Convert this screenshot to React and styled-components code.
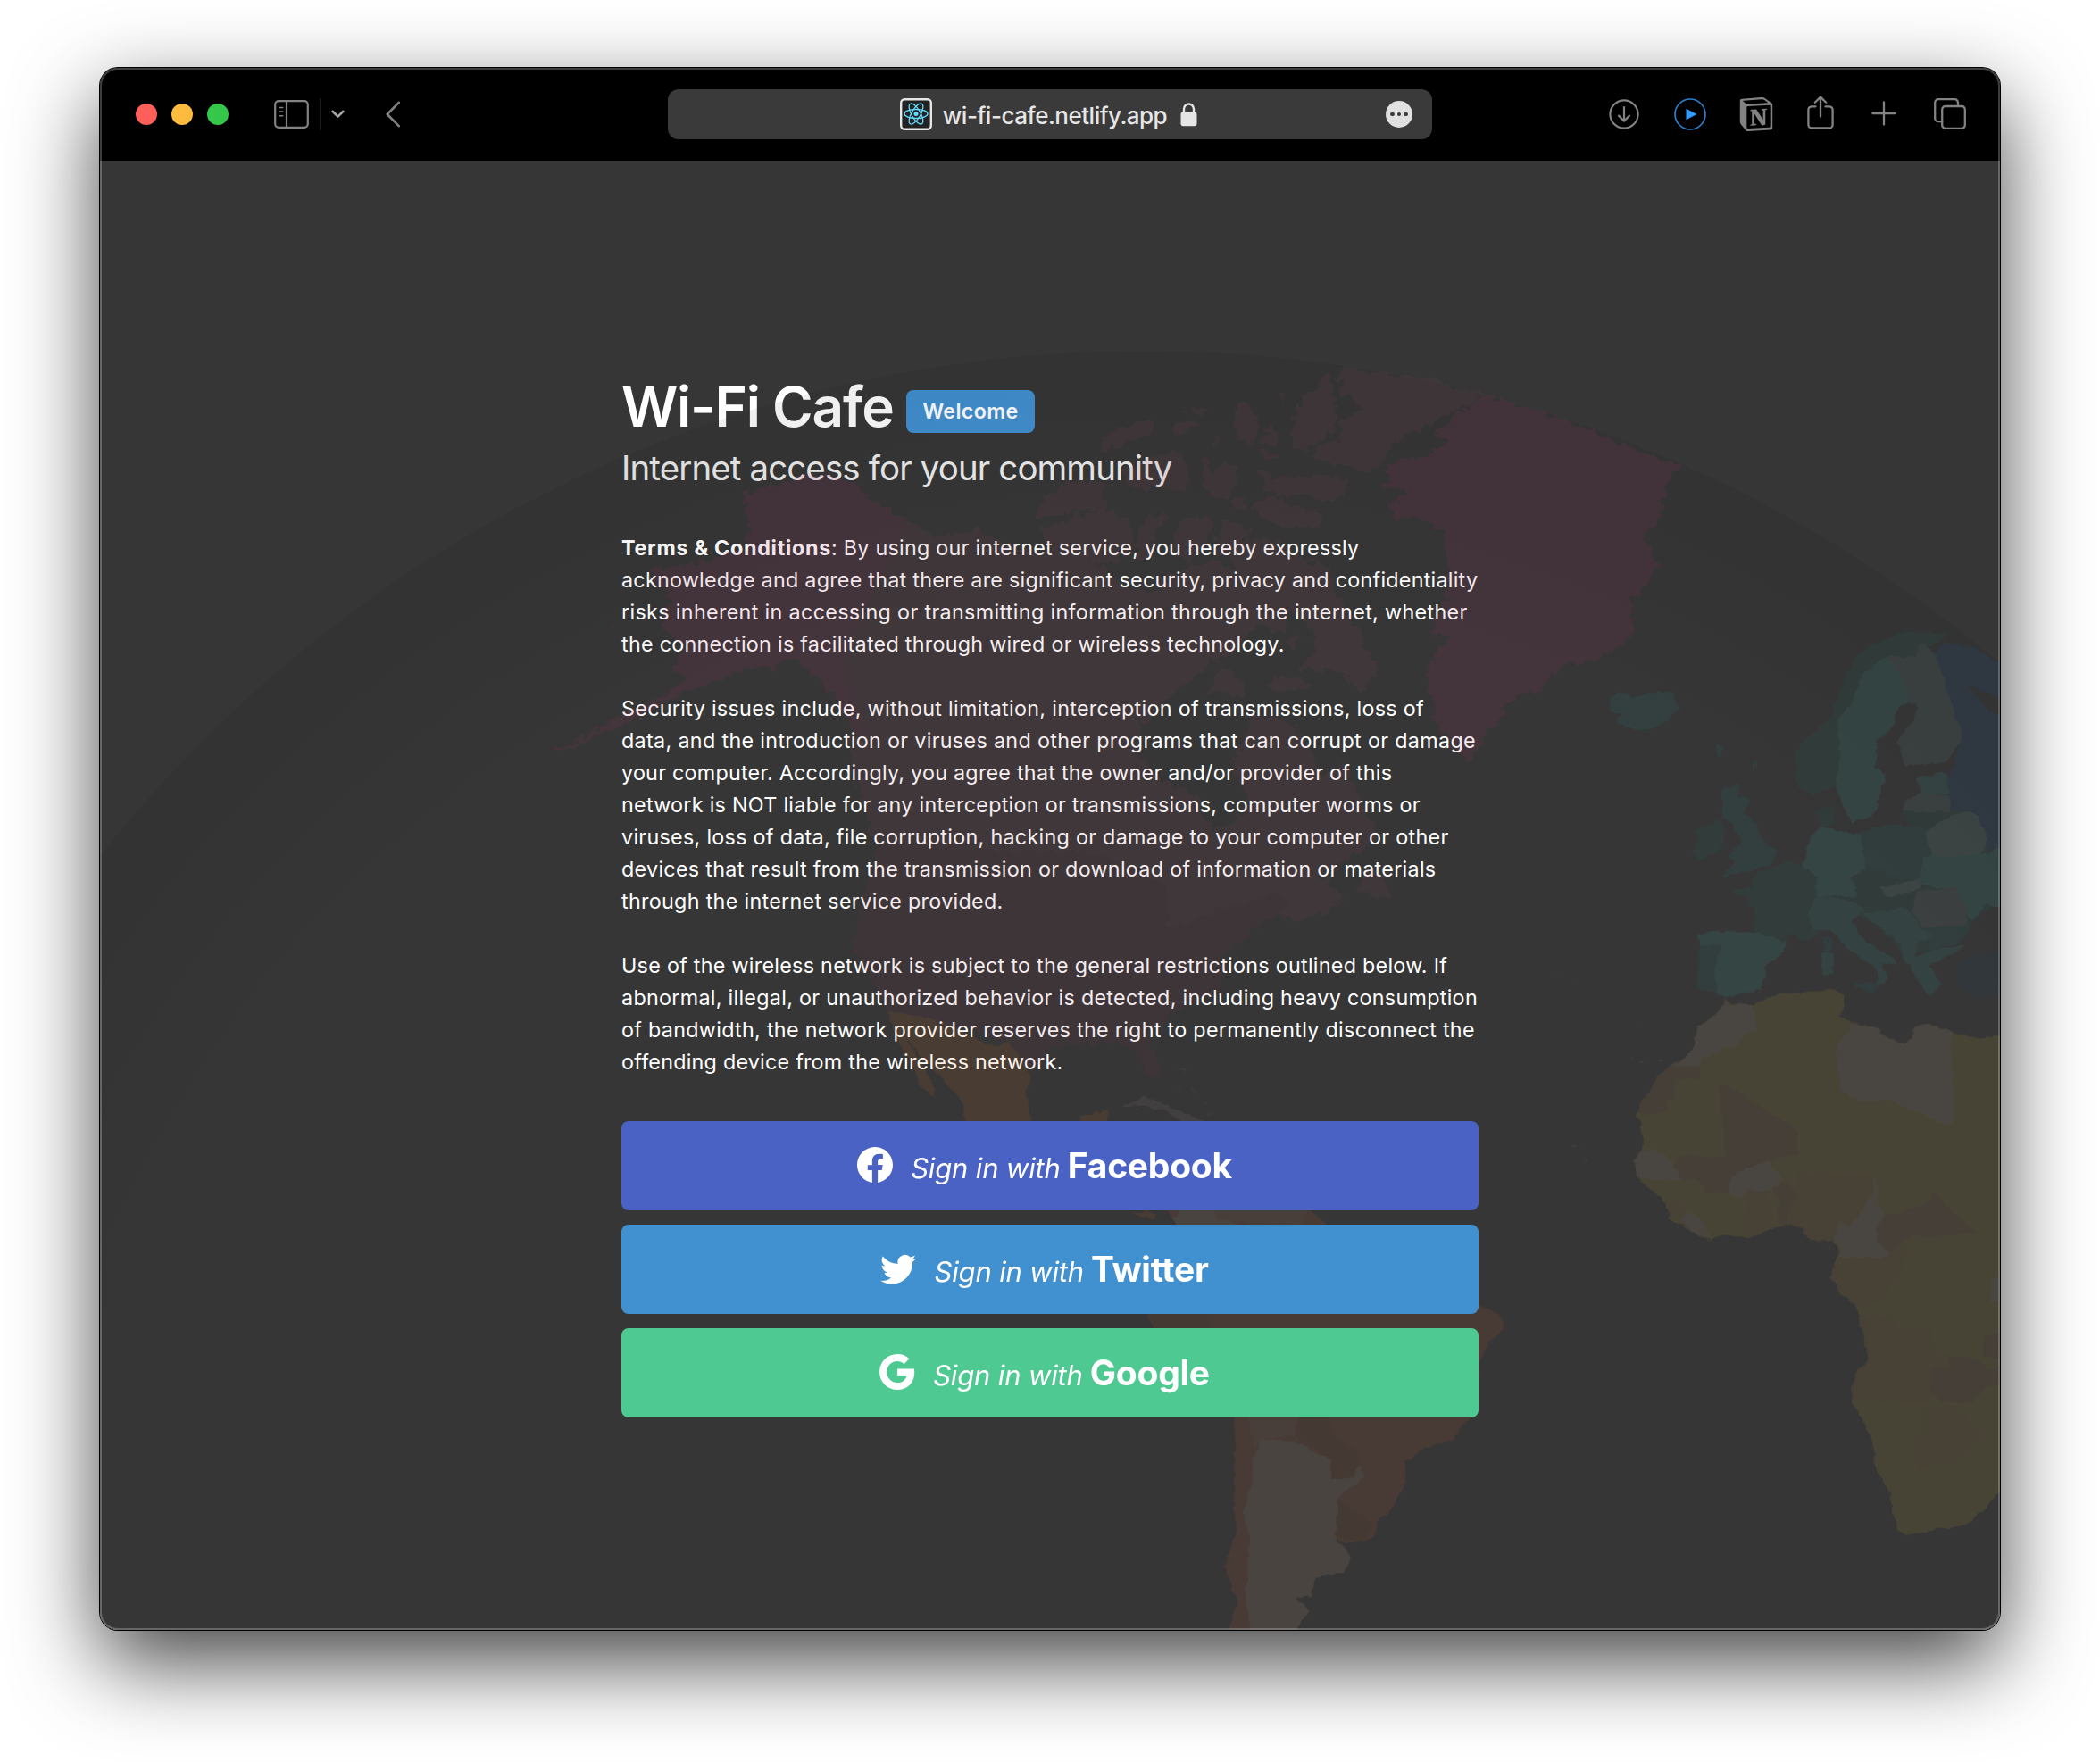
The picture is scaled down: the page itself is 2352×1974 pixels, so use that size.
import React from 'react';
import styled, { createGlobalStyle } from 'styled-components';
import { BsFacebook, BsTwitter, BsGoogle } from 'react-icons/bs';
import { SiNotion } from 'react-icons/si';

const GlobalStyle = createGlobalStyle`
  *, *::before, *::after { box-sizing: border-box; }
  body {
    margin: 0;
    background: #fff;
    font-family: Inter, "Liberation Sans", sans-serif;
    -webkit-font-smoothing: antialiased;
  }
`;

const Desktop = styled.div`
  width: 2352px;
  height: 1974px;
  padding: 76px 112px 148px;
  overflow: hidden;
  background: #fff;
`;

const Window = styled.main`
  position: relative;
  display: flex;
  flex-direction: column;
  height: 1750px;
  border-radius: 20px;
  overflow: hidden;
  background: #363636;
  &::after {
    content: '';
    position: absolute;
    inset: 0;
    border-radius: 20px;
    box-shadow: inset 0 0 0 2px rgba(255, 255, 255, 0.24);
    pointer-events: none;
  }
`;

const WindowShadow = styled.div`
  border-radius: 20px;
  box-shadow: 0 0 0 1px #000, 0 36px 96px rgba(0, 0, 0, 0.74);
`;

const Toolbar = styled.header`
  display: flex;
  align-items: center;
  flex: none;
  height: 104px;
  background: #000;
`;

const LeftTools = styled.div`
  display: flex;
  align-items: center;
  width: 636px;
  padding-left: 40px;
`;

const Lights = styled.div`
  display: flex;
  gap: 16px;
`;

const Light = styled.span`
  width: 24px;
  height: 24px;
  border-radius: 50%;
  background: ${(p) => p.$color};
`;

const Tool = styled.span`
  display: flex;
  margin-left: ${(p) => p.$gap}px;
  padding-bottom: ${(p) => p.$lift || 1}px;
  color: ${(p) => p.$color || '#828282'};
`;

const ToolDivider = styled.span`
  width: 2px;
  height: 36px;
  margin-left: 12px;
  background: #1c1c1c;
`;

const AddressBar = styled.div`
  display: grid;
  grid-template-columns: 1fr auto 1fr;
  align-items: center;
  width: 856px;
  height: 56px;
  border-radius: 12px;
  background: #3a3a3a;
`;

const Address = styled.div`
  grid-column: 2;
  display: flex;
  align-items: center;
  padding-right: 3px;
  color: #e6e6e6;
`;

const Url = styled.span`
  margin: 4px 15px 0 12px;
  font-size: 26px;
  font-weight: 500;
  line-height: 34px;
  letter-spacing: -0.5px;
`;

const MoreButton = styled.span`
  display: flex;
  align-items: center;
  justify-content: center;
  justify-self: end;
  gap: 3px;
  width: 30px;
  height: 30px;
  margin-right: 22px;
  border-radius: 50%;
  background: #e0e0e0;
`;

const Dot = styled.i`
  width: 4.5px;
  height: 4.5px;
  border-radius: 50%;
  background: #3a3a3a;
`;

const RightTools = styled.div`
  display: flex;
  align-items: center;
  justify-content: flex-end;
  flex: 1;
  padding-right: 38px;
`;

const Page = styled.div`
  position: relative;
  display: flex;
  justify-content: center;
  flex: 1;
  padding-top: 239px;
`;

const MapOverlay = styled.svg`
  position: absolute;
  inset: 0;
  width: 2128px;
  height: 1646px;
  pointer-events: none;
`;

const Content = styled.section`
  width: 960px;
  color: #fff;
`;

const TitleRow = styled.div`
  display: flex;
  align-items: flex-start;
  height: 72px;
`;

const Title = styled.h1`
  width: 319px;
  margin: 0;
  font-size: 62px;
  font-weight: 600;
  line-height: 74px;
  letter-spacing: -1.25px;
  white-space: nowrap;
`;

const Badge = styled.span`
  display: flex;
  align-items: center;
  justify-content: center;
  width: 144px;
  height: 48px;
  margin-top: 18px;
  padding-bottom: 1px;
  border-radius: 8px;
  background: #4190d0;
  font-size: 23.2px;
  font-weight: 600;
  letter-spacing: 0.35px;
`;

const Subtitle = styled.p`
  margin: 9px 0 48px;
  color: #ececec;
  font-size: 38.4px;
  font-weight: 400;
  line-height: 48px;
  letter-spacing: -0.84px;
  white-space: nowrap;
`;

const Terms = styled.div`
  display: grid;
  gap: 36px;
  margin-bottom: 48px;
  font-size: 23.3px;
  line-height: 36px;
`;

const Paragraph = styled.p`
  margin: 0;
`;

const Line = styled.span`
  display: block;
  width: max-content;
  white-space: nowrap;
  letter-spacing: ${(p) => p.$track}px;
  strong {
    font-weight: 700;
    letter-spacing: 0.72px;
  }
`;

const Buttons = styled.div`
  position: relative;
  z-index: 1;
  display: grid;
  gap: 16px;
`;

const SignIn = styled.button`
  display: flex;
  align-items: center;
  justify-content: center;
  height: 100px;
  padding: 0 12px 0 0;
  border: 0;
  border-radius: 8px;
  background: ${(p) => p.$color};
  color: #fff;
  font-family: inherit;
  svg {
    width: 40px;
    height: 40px;
    margin: 0 20px 2px 0;
  }
`;

const SignInText = styled.span`
  display: flex;
  align-items: baseline;
  gap: 8px;
  padding-bottom: 2px;
  em {
    font-size: 31px;
    font-weight: 400;
    letter-spacing: -0.15px;
  }
  strong {
    font-size: 39px;
    font-weight: 700;
    letter-spacing: -0.25px;
  }
`;

const paragraphs = [
  [
    [0.26, <><strong>Terms &amp; Conditions</strong>: By using our internet service, you hereby expressly</>],
    [0.26, 'acknowledge and agree that there are significant security, privacy and confidentiality'],
    [0.345, 'risks inherent in accessing or transmitting information through the internet, whether'],
    [0.28, 'the connection is facilitated through wired or wireless technology.'],
  ],
  [
    [0.31, 'Security issues include, without limitation, interception of transmissions, loss of'],
    [0.335, 'data, and the introduction or viruses and other programs that can corrupt or damage'],
    [0.25, 'your computer. Accordingly, you agree that the owner and/or provider of this'],
    [0.285, 'network is NOT liable for any interception or transmissions, computer worms or'],
    [0.295, 'viruses, loss of data, file corruption, hacking or damage to your computer or other'],
    [0.3, 'devices that result from the transmission or download of information or materials'],
    [0.315, 'through the internet service provided.'],
  ],
  [
    [0.28, 'Use of the wireless network is subject to the general restrictions outlined below. If'],
    [0.295, 'abnormal, illegal, or unauthorized behavior is detected, including heavy consumption'],
    [0.3, 'of bandwidth, the network provider reserves the right to permanently disconnect the'],
    [0.24, 'offending device from the wireless network.'],
  ],
];

const providers = [
  { name: 'Facebook', color: '#4a62c4', Icon: BsFacebook },
  { name: 'Twitter', color: '#4190cf', Icon: BsTwitter },
  { name: 'Google', color: '#4ec991', Icon: BsGoogle },
];

const northAmerica = [
  ['#c03470', 'M330 300L385 283 440 262 512 280 540 318 596 350 490 620 500 680 530 780 520 800 500 750 480 700 450 660 410 620 380 640 350 640 290 665 240 690 190 720 140 750 90 775 130 735 200 700 240 665 220 640 235 600 200 560 215 510 180 450 250 440 335 410 340 370Z'],
  ['#9a4c62', 'M596 350L640 385 700 372 760 400 850 425 900 440 940 480 1000 500 1040 470 1090 520 1100 600 1080 630 1012 697 965 755 960 810 1000 860 1050 890 1080 960 1105 955 1140 905 1110 825 1130 790 1140 735 1200 745 1230 790 1255 850 1290 830 1310 880 1330 930 1345 975 1300 1010 1230 1060 1160 1080 1250 1045 1290 1090 1210 1135 1180 1120 1140 1160 1010 1160 1005 1070 900 1010 545 990 530 930 510 860 500 780 530 780 500 680 490 620Z'],
  ['#8a3454', 'M545 990L900 1005 1000 1060 1015 1150 1070 1120 1180 1080 1210 1100 1140 1160 1100 1200 1095 1260 1030 1310 970 1350 990 1395 1000 1440 980 1440 960 1390 930 1370 870 1375 830 1380 790 1430 740 1370 700 1350 640 1335 565 1312 530 1240 505 1180 520 1100Z'],
  ['#9a4c62', 'M1330 1030L1365 1060 1360 1090 1310 1075ZM1215 1120L1290 1095 1270 1115 1205 1140Z'],
  ['#c03470', 'M0 795L30 800 60 785 100 760 90 780 40 802ZM120 560L128 558 126 564Z'],
];

const arctic = 'M905 95L1000 105 1150 130 1300 160 1400 185 1360 205 1300 240 1200 290 1080 350 1040 420 1000 445 930 430 810 400 830 350 900 340 905 270 980 240 900 180ZM870 110L880 200 895 240 885 320 810 350 800 375 740 370 740 300 760 220 800 180ZM620 440L640 430 680 470 820 455 930 470 920 530 850 550 800 525 720 530 650 505ZM610 570L640 530 690 530 730 560 850 580 830 640 720 630 640 600ZM90 340L200 285 280 275 270 320 190 350 120 375ZM340 280L420 270 420 290 370 325 340 305ZM385 240L455 228 450 262 410 262ZM540 280L560 260 560 215 600 215 635 290 600 360 560 330ZM640 350L670 290 700 330 690 365ZM632 378L690 390 690 410 650 405ZM470 370L485 322 490 345ZM180 480L170 440 250 400 370 370 400 460 380 505 200 505ZM440 405L460 405 470 460 510 415 560 430 560 490 510 535 460 520 440 470ZM530 545L580 520 590 570 560 580ZM-125 600L-90 535 0 475 90 480 120 540 115 560 0 585ZM-110 640L0 600 110 565 200 610 200 700 150 760 0 740 -60 720ZM215 680L250 600 330 580 320 610 270 650 270 740 220 730ZM340 650L390 600 480 600 460 680 400 760 350 720ZM480 680L520 610 610 640 560 700 500 740ZM530 700L620 670 700 680 760 740 860 760 900 870 960 970 1000 1060 1040 1110 970 1185 900 1110 760 1110 820 1050 820 980 720 900 640 900 560 800ZM650 1160L700 1130 800 1150 790 1180 680 1180ZM450 1190L500 1100 540 1110 590 1190 550 1215 500 1180ZM720 1010L770 990 740 1045ZM700 190L720 190 710 215ZM480 740L600 800 740 880 720 990 620 960 540 1060 420 1080 300 1000 300 800Z';

const greenland = 'M340 132L470 165 640 235 790 292 758 340 743 420 708 460 743 520 713 570 673 600 684 650 680 690 595 740 520 757 465 812 398 827 378 868 338 925 312 975 280 955 230 900 215 820 205 770 230 720 265 690 220 680 225 650 250 600 255 500 240 440 190 412 135 415 115 385 170 350 100 340 120 330 110 295 160 270 215 270 250 235 220 220 260 185Z';

const europe = [
  ['#128074', 'M1072 1220L1110 1135 1200 1145 1350 1130 1335 1060 1400 1050 1500 1180 1520 1300 1460 1340 1450 1360 1370 1410 1310 1420 1240 1350 1180 1320 1090 1365 1035 1375 965 1370 960 1265Z'],
  ['#20a09a', 'M628 835L650 815 680 830 710 822 770 818 780 850 760 880 705 905 660 890 645 880 660 865 630 858Z'],
  ['#128074', 'M1185 750L1230 710 1300 680 1400 680 1385 700 1350 705 1330 740 1270 735 1215 770 1185 840 1155 880 1160 960 1145 1030 1090 1050 1060 1030 1055 950 1100 910 1140 870 1165 800Z'],
  ['#36d2c0', 'M1270 735L1300 750 1310 800 1320 835 1285 850 1280 890 1240 930 1235 990 1260 1010 1230 1100 1185 1115 1150 1040 1160 960 1155 880 1185 840 1215 770Z'],
  ['#72a0a0', 'M1270 738L1330 735 1350 705 1385 740 1410 810 1440 920 1400 975 1310 985 1290 930 1330 880 1340 845 1320 835 1305 780Z'],
  ['#0a5ec0', 'M1378 725L1400 705 1460 715 1530 750 1530 830 1500 815 1440 790 1460 815 1490 850 1530 880 1530 1180 1485 1175 1495 1150 1470 1100 1410 1080 1400 1030 1425 985 1440 920 1410 810Z'],
  ['#36c8bc', 'M1335 1015L1400 1005 1405 1050 1350 1045Z'],
  ['#72a0a0', 'M1310 1065L1350 1050 1410 1060 1410 1090 1310 1095Z'],
  ['#0e706c', 'M1305 1095L1390 1095 1380 1130 1340 1135Z'],
  ['#7cd2c6', 'M1385 1120L1440 1095 1470 1100 1495 1155 1480 1195 1370 1195 1350 1150Z'],
  ['#128a80', 'M1205 1145L1260 1125 1350 1130 1365 1190 1345 1250 1220 1230 1200 1180Z'],
  ['#36d2c0', 'M1350 1200L1480 1195 1530 1180 1530 1310 1490 1305 1460 1340 1430 1270 1345 1260Z'],
  ['#0e706c', 'M1180 1230L1240 1220 1290 1250 1250 1270 1255 1290 1245 1310 1180 1305 1140 1290 1190 1275ZM1250 1300L1340 1275 1350 1290 1310 1325 1265 1320ZM1105 1090L1145 1080 1140 1120 1115 1125Z'],
  ['#36d2c0', 'M1110 1130L1200 1150 1215 1225 1180 1240 1195 1285 1100 1285 1100 1245 1072 1220 1090 1160Z'],
  ['#7cd2c6', 'M1255 1270L1340 1250 1340 1270 1265 1285Z'],
  ['#78a0a0', 'M1340 1280L1420 1270 1445 1310 1450 1360 1360 1365 1325 1320Z'],
  ['#128a80', 'M1355 1365L1455 1355 1430 1395 1370 1410ZM1190 1490L1240 1490 1235 1510ZM1120 1390L1135 1385 1135 1415 1122 1412Z'],
  ['#2cbcae', 'M1215 1330L1310 1320 1360 1380 1330 1400 1330 1440 1310 1440 1300 1395 1240 1350ZM1320 1440L1370 1415 1440 1405 1390 1430 1360 1450 1390 1490 1365 1515 1335 1480Z'],
  ['#084468', 'M1430 1440L1530 1415 1530 1510 1470 1520 1430 1490Z'],
  ['#128074', 'M910 1275L960 1265 960 1245 1030 1210 1072 1220 1100 1245 1100 1290 1090 1330 1110 1370 1080 1385 1035 1375 1030 1395 960 1370 965 1320 940 1285Z'],
  ['#2cbcae', 'M1090 1330L1100 1290 1180 1300 1210 1320 1180 1340 1200 1380 1285 1440 1250 1440 1265 1480 1245 1490 1250 1460 1170 1400 1135 1360 1095 1365ZM1118 1420L1140 1425 1138 1465 1120 1468Z'],
  ['#36d2c0', 'M830 1380L870 1370 960 1375 1030 1395 1025 1415 980 1450 985 1470 970 1500 920 1510 890 1522 870 1505 862 1460 880 1405 840 1405Z'],
  ['#128a80', 'M838 1405L880 1405 862 1460 870 1505 832 1500 830 1470Z'],
  ['#1a9a8e', 'M885 1045L925 1030 920 1060 945 1065 930 1100 955 1110 975 1160 1008 1180 995 1215 930 1230 890 1240 920 1205 900 1195 930 1170 925 1145 890 1100ZM875 940L882 945 878 965ZM960 975L966 985 956 995Z'],
  ['#128074', 'M850 1125L880 1115 890 1145 880 1180 830 1200 818 1185 835 1160 825 1140Z'],
];

const africa = [
  ['#f6cc34', 'M735 170L810 145 990 130 1020 145 1025 175 1005 195 1045 215 1125 225 1140 245 1215 270 1240 255 1240 225 1280 217 1360 240 1455 255 1520 243 1520 1380 1460 1440 1400 1475 1290 1488 1225 1500 1190 1490 1180 1455 1165 1385 1125 1340 1108 1255 1070 1190 1047 1170 1050 1125 1065 1090 1100 1055 1085 1005 1065 930 1010 890 983 855 1000 830 1010 790 990 760 915 762 890 728 860 720 800 730 735 752 640 747 600 760 545 740 475 705 465 670 430 640 378 605 360 565 385 540 395 505 385 460 373 445 400 400 440 350 480 320 530 300 550 275 565 225 620 200 650 158 690 170Z'],
  ['#fcdeb4', 'M650 158L660 168 735 170 752 235 715 240 690 270 575 305 572 323 475 323 530 300 550 275 565 225 628 195ZM1040 220L1125 225 1140 245 1215 270 1240 255 1240 225 1280 217 1358 238 1368 467 1340 472 1165 405 1105 413 1050 405 1010 380 1000 270 1040 235ZM360 565L385 540 430 533 485 565 512 610 378 605 372 590ZM655 640L685 590 780 560 830 610 800 635 715 635 700 655ZM510 710L540 685 580 715 600 757 545 740ZM1110 598L1130 620 1130 670 1150 695 1125 730 1130 760 1165 795 1160 805 1012 800 1010 770 988 755 1010 715 1045 720 1085 680 1120 630ZM1490 860L1520 840 1520 910 1480 915Z'],
  ['#d89444', 'M475 323L572 323 572 354 494 354 494 402 470 408 470 443 373 443 400 400 440 350ZM630 374L665 374 820 455 880 487 875 545 770 565 685 590 655 640 585 640 575 610 510 608 490 570 510 550 652 552ZM800 630L850 610 875 650 848 720 820 722 818 660ZM1150 700L1280 670 1310 640 1340 670 1440 740 1290 755 1230 750 1165 795 1130 760 1125 730ZM1295 1080L1350 1080 1350 1050 1420 1055 1485 1085 1520 1070 1520 1120 1470 1130 1420 1170 1320 1165 1295 1140ZM1460 1000L1520 990 1520 1060 1460 1050Z'],
  ['#f0a840', 'M470 670L500 652 525 675 515 705 475 700ZM715 640L780 635 797 690 790 725 735 752 708 740ZM875 590L1110 598 1120 625 1080 680 1045 720 1010 715 985 757 915 762 890 728 848 720 848 670 870 655ZM1000 805L1160 805 1190 770 1225 775 1200 850 1160 880 1160 910 1065 930 1010 890 983 855ZM1070 950L1170 950 1200 985 1290 975 1310 1040 1350 1050 1350 1080 1295 1080 1300 1170 1047 1160 1050 1125 1065 1090 1100 1055 1085 1005ZM1270 1180L1375 1175 1465 1250 1375 1318 1310 1315 1260 1338 1243 1310 1245 1245 1270 1245ZM972 780L988 770 984 783ZM355 300L362 305 356 308ZM378 312L398 310 385 317ZM440 312L452 305 444 317Z'],
  ['#c8b4a0', 'M118 95L126 97 120 99ZM180 112L188 114 182 116ZM376 219L384 220 378 222ZM172 521L186 523 178 526ZM196 530L210 531 204 533ZM210 556L218 560 212 563Z'],
];

const latinAmerica = [
  ['#f2682a', 'M640 530L690 532 680 550 660 540ZM710 530L725 520 980 520 1020 560 1100 620 1317 745 1355 765 1365 800 1330 850 1317 890 1310 1000 1285 1030 1270 1060 1220 1075 1175 1110 1173 1160 1140 1230 1125 1240 1105 1290 1060 1298 1035 1285 1000 1378 960 1425 930 1500 830 1500 845 1430 822 1350 845 1270 838 1200 843 1100 840 1000 720 850 670 775 720 700 740 620 725 560Z'],
  ['#fcc8a0', 'M895 1055L950 1060 1030 1105 1030 1145 1085 1120 1095 1145 1045 1190 1038 1285 1068 1330 1055 1365 1000 1378 990 1420 960 1425 985 1455 960 1500 872 1500 862 1430 870 1280 858 1230 875 1160 878 1100ZM735 524L800 524 805 548 850 556 850 640 740 600 718 545Z'],
  ['#f49a70', 'M865 1000L965 1000 958 1050 895 1055 880 1080ZM800 524L980 524 975 560 860 556 805 548Z'],
  ['#d65e20', 'M970 1000L1025 1005 1035 1050 1085 1090 1075 1145 1030 1150 1030 1105 960 1050ZM1045 1200L1110 1250 1095 1295 1035 1280ZM670 775L720 700 790 720 790 800 700 810Z'],
  ['#f07828', 'M165 68L240 80 300 110 370 150 400 140 445 215 435 260 445 330 440 400 310 330 315 290 280 235 240 190 200 130 225 180 258 250 250 265 225 235 210 190 180 130ZM540 310L595 295 590 330 540 330Z'],
  ['#b89a9e', 'M620 290L665 265 710 285 785 325 740 325 700 295 650 285ZM650 293L656 295 652 297Z'],
  ['#8a8a54', 'M722 200L745 202 745 212 740 205ZM730 235L735 255 731 250ZM755 245L770 258 762 256ZM780 270L788 280 784 282ZM790 300L800 302 792 308ZM1505 375L1512 380 1506 382ZM1525 408L1532 412 1527 414Z'],
];

function Shapes({ items, seam = 0 }) {
  return items.map(([fill, d], i) => (
    <path key={i} fill={fill} stroke={fill} strokeWidth={seam} strokeLinejoin="round" d={d} />
  ));
}

function GlobeMap() {
  return (
    <MapOverlay viewBox="112 180 2128 1646">
      <defs>
        <radialGradient id="limb" gradientUnits="userSpaceOnUse" cx="1281" cy="1883" r="1490">
          <stop offset="0.8" stopColor="#000" stopOpacity="0" />
          <stop offset="1" stopColor="#000" stopOpacity="0.065" />
        </radialGradient>
        <filter id="coast" filterUnits="userSpaceOnUse" x="112" y="180" width="2128" height="1646">
          <feTurbulence type="fractalNoise" baseFrequency="0.1" numOctaves="3" seed="4" />
          <feDisplacementMap in="SourceGraphic" scale="16" xChannelSelector="R" yChannelSelector="G" />
        </filter>
        <filter id="border" filterUnits="userSpaceOnUse" x="112" y="180" width="2140" height="1660">
          <feTurbulence type="fractalNoise" baseFrequency="0.09" numOctaves="3" seed="9" />
          <feDisplacementMap in="SourceGraphic" scale="7" xChannelSelector="R" yChannelSelector="G" />
        </filter>
      </defs>
      <circle cx="1281" cy="1883" r="1490" fill="url(#limb)" />
      <g opacity="0.1">
        <g filter="url(#coast)">
          <g transform="translate(600 380) scale(.70153 .57398)"><Shapes items={northAmerica} /></g>
          <g transform="translate(1200 380) scale(.33333)"><path fill="#9a4c62" d={arctic} /></g>
          <g transform="translate(1498 380) scale(.4847)"><path fill="#c03470" d={greenland} /></g>
        </g>
        <g filter="url(#border)">
          <g transform="translate(1500 380) scale(.4847)"><Shapes items={europe} seam={6} /></g>
          <g transform="translate(1700 1050) scale(.35714 .44643)"><Shapes items={africa} /></g>
          <g transform="translate(900 1100) scale(.57398 .48469)"><Shapes items={latinAmerica} /></g>
        </g>
      </g>
    </MapOverlay>
  );
}

const stroke = { fill: 'none', stroke: 'currentColor', strokeLinecap: 'round', strokeLinejoin: 'round' };

const SidebarIcon = () => (
  <svg width="39" height="32" viewBox="0 0 39 32" {...stroke} strokeWidth="2.2">
    <rect x="1.2" y="1.2" width="36.6" height="29.6" rx="4" />
    <path d="M14 1.2v29.6" />
    <path d="M5.8 8.5h4M5.8 13h4M5.8 17.7h4" strokeWidth="1.4" />
  </svg>
);
const ChevronIcon = () => (
  <svg width="15" height="10" viewBox="0 0 15 10" {...stroke} strokeWidth="2.6"><path d="M1.6 1.8l5.9 5.8 5.9-5.8" /></svg>
);
const BackIcon = () => (
  <svg width="17" height="30" viewBox="0 0 17 30" {...stroke} strokeWidth="2.6"><path d="M14.7 1.8L1.8 15l12.9 13.2" /></svg>
);
const ReactFavicon = () => (
  <svg width="36" height="36" viewBox="0 0 36 36" fill="none">
    <rect x="1.2" y="1.2" width="33.6" height="33.6" rx="4" fill="#222" stroke="#e6e6e6" strokeWidth="2.4" />
    <g stroke="#61dafb" strokeWidth="1.3">
      <ellipse cx="18" cy="17.5" rx="13" ry="5" />
      <ellipse cx="18" cy="17.5" rx="13" ry="5" transform="rotate(60 18 17.5)" />
      <ellipse cx="18" cy="17.5" rx="13" ry="5" transform="rotate(120 18 17.5)" />
    </g>
    <circle cx="18" cy="17.5" r="2.5" fill="#61dafb" />
  </svg>
);
const LockIcon = () => (
  <svg width="19" height="28" viewBox="0 0 19 28" fill="none">
    <path d="M4 13V8a5.5 5.5 0 0 1 11 0v5" stroke="currentColor" strokeWidth="2.4" />
    <rect x="0.5" y="11.6" width="18" height="15.6" rx="2.6" fill="currentColor" />
  </svg>
);
const DownloadIcon = () => (
  <svg width="34" height="34" viewBox="0 0 34 34" {...stroke} strokeWidth="2.2">
    <circle cx="17" cy="17" r="15.6" />
    <path d="M17 9.2v15M11 18.6l6 6 6-6" />
  </svg>
);
const PlayIcon = () => (
  <svg width="36" height="36" viewBox="0 0 36 36">
    <circle cx="18" cy="18" r="17" fill="none" stroke="#2b7fcb" strokeWidth="1.7" />
    <path d="M13.5 11.8v12.4L25.5 18z" fill="#2f9bff" />
  </svg>
);
const ShareIcon = () => (
  <svg width="30" height="38" viewBox="0 0 30 38" {...stroke} strokeWidth="2.3">
    <path d="M9.5 12.3H5.2a3.8 3.8 0 0 0-3.8 3.8v16.6a3.8 3.8 0 0 0 3.8 3.8h19.6a3.8 3.8 0 0 0 3.8-3.8V16.1a3.8 3.8 0 0 0-3.8-3.8h-4.3" />
    <path d="M15 23.5V1.8M8.8 7.8L15 1.6l6.2 6.2" />
  </svg>
);
const PlusIcon = () => (
  <svg width="28" height="28" viewBox="0 0 28 28" {...stroke} strokeWidth="2.3"><path d="M14 1.4v25.2M1.4 14h25.2" /></svg>
);
const TabsIcon = () => (
  <svg width="36" height="35" viewBox="0 0 36 35" {...stroke} strokeWidth="2.3">
    <rect x="9.2" y="9" width="25.6" height="24.8" rx="3.6" />
    <path d="M9.2 26.2H5a3.8 3.8 0 0 1-3.8-3.8V5A3.8 3.8 0 0 1 5 1.2h18.2A3.8 3.8 0 0 1 27 5v4" />
  </svg>
);

export default function App() {
  return (
    <Desktop>
      <GlobalStyle />
      <WindowShadow>
        <Window>
          <Toolbar>
            <LeftTools>
              <Lights>
                <Light $color="#ff5f5b" />
                <Light $color="#febb40" />
                <Light $color="#34c74a" />
              </Lights>
              <Tool $gap={51}><SidebarIcon /></Tool>
              <ToolDivider />
              <Tool $gap={11} $color="#a8a8a8"><ChevronIcon /></Tool>
              <Tool $gap={46}><BackIcon /></Tool>
            </LeftTools>
            <AddressBar>
              <Address>
                <ReactFavicon />
                <Url>wi-fi-cafe.netlify.app</Url>
                <LockIcon />
              </Address>
              <MoreButton><Dot /><Dot /><Dot /></MoreButton>
            </AddressBar>
            <RightTools>
              <Tool><DownloadIcon /></Tool>
              <Tool $gap={39}><PlayIcon /></Tool>
              <Tool $gap={37}><SiNotion size={38} /></Tool>
              <Tool $gap={38} $lift={4}><ShareIcon /></Tool>
              <Tool $gap={42} $lift={3}><PlusIcon /></Tool>
              <Tool $gap={42} $lift={2}><TabsIcon /></Tool>
            </RightTools>
          </Toolbar>
          <Page>
            <Content>
              <TitleRow>
                <Title>Wi-Fi Cafe</Title>
                <Badge>Welcome</Badge>
              </TitleRow>
              <Subtitle>Internet access for your community</Subtitle>
              <Terms>
                {paragraphs.map((lines, i) => (
                  <Paragraph key={i}>
                    {lines.map(([track, text], j) => <Line key={j} $track={track}>{text}</Line>)}
                  </Paragraph>
                ))}
              </Terms>
              <Buttons>
                {providers.map(({ name, color, Icon }) => (
                  <SignIn key={name} $color={color}>
                    <Icon />
                    <SignInText><em>Sign in with</em><strong>{name}</strong></SignInText>
                  </SignIn>
                ))}
              </Buttons>
            </Content>
            <GlobeMap />
          </Page>
        </Window>
      </WindowShadow>
    </Desktop>
  );
}
